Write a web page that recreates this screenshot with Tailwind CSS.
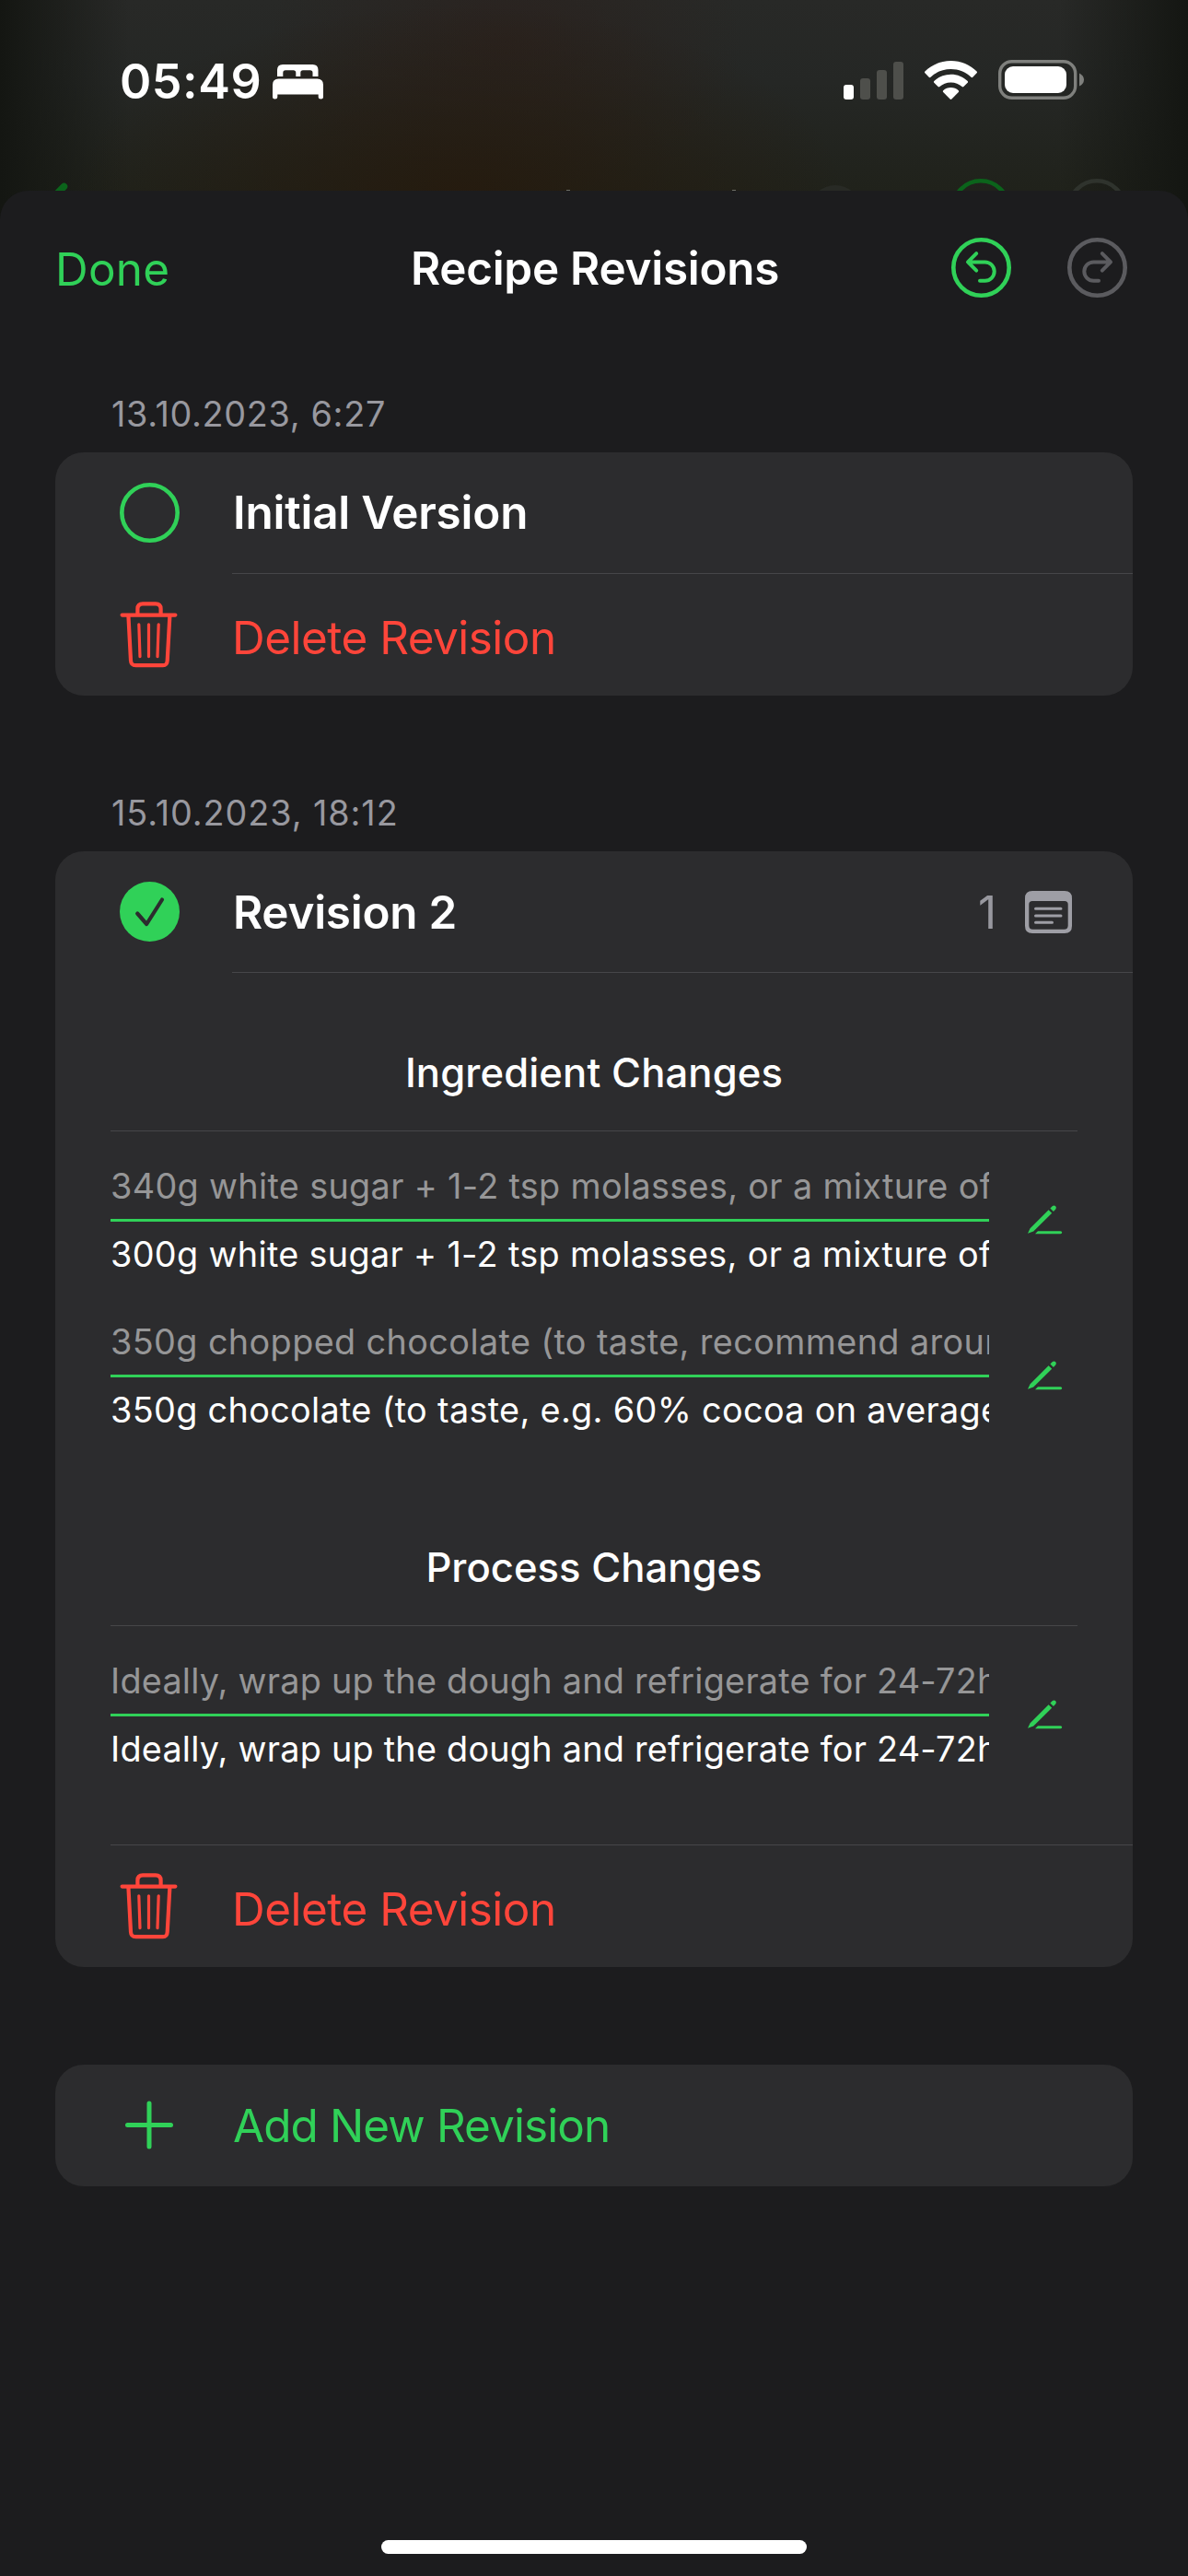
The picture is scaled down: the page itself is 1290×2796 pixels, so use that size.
<!DOCTYPE html>
<html lang="en">
<head>
<meta charset="utf-8">
<title>Recipe Revisions</title>
<script src="https://cdn.jsdelivr.net/npm/@tailwindcss/browser@4"></script>
</head>
<body class="bg-[#151713] font-['Inter',sans-serif] text-white">
<svg class="hidden">
  <symbol id="trash" viewBox="0 0 64 72">
    <g fill="none" stroke="#ff453a" stroke-linecap="round" stroke-linejoin="round">
      <path stroke-width="4.2" d="M2.6 14.6H60.4M19.4 14V8Q19.4 2.4 25 2.4H39Q44.6 2.4 44.6 8V14M9.4 15L12 64Q12.3 69.2 17.4 69.2H47Q51.4 69.2 51.7 64L54.4 15"/>
      <path stroke-width="3.2" d="M20.8 24.8L22 59.6M31.5 24.8V59.6M42.2 24.8L41 59.6"/>
    </g>
  </symbol>
  <symbol id="pencil" viewBox="0 0 38 33">
    <path fill="#30d158" d="M0 31.8L2.6 26.2L22.6 6.2L26.2 9.8L6.2 29.6ZM24.4 4.6L26.9 2.1Q28.6 .8 30.2 2.2Q31.6 3.8 30.3 5.5L27.9 8ZM11 29.2H35.6Q37.2 29.4 37.2 30.7Q37.2 32 35.6 32.2H8Z"/>
  </symbol>
</svg>
<div class="flex h-[2796px] w-[1290px] flex-col overflow-hidden bg-[radial-gradient(ellipse_420px_210px_at_500px_215px,#261a0de0,#261a0d00),radial-gradient(ellipse_260px_170px_at_550px_45px,#2c1e1990,#2c1e1900),linear-gradient(90deg,#141612_0px,#141612b0_40px,#14161200_140px,#14161200_1150px,#141612b0_1250px,#141612_1290px),linear-gradient(180deg,#282927_0px,#252725_90px,#20221b_207px,#15160f_250px)]">

  <!-- status bar -->
  <header class="relative flex h-[207px] shrink-0 items-start justify-between pl-[130px] pr-[113px] pt-[62px]">
    <div class="flex items-center gap-[12px]">
      <span class="pt-px text-[52px] font-semibold leading-[52px] tracking-[0.54px]">05:49</span>
      <svg class="mt-px h-[38px] w-[55px]" viewBox="0 0 55 38" fill="#fff">
        <path d="M5 13V6Q5 0 11 0H43.500Q49.500 0 49.500 6V13H43.500V9Q43.500 6.300 40.800 6.300H33Q30.300 6.300 30.300 9V13H25.300V9Q25.300 6.300 22.600 6.300H14Q11.300 6.300 11.300 9V13Z"/>
        <path d="M0 22Q0 15.500 6.500 15.500H48.500Q55 15.500 55 22V35Q55 37.500 52.500 37.500Q49.700 37.500 49.700 35V32.500H5.300V35Q5.300 37.500 2.500 37.500Q0 37.500 0 35Z"/>
      </svg>
    </div>
    <div class="flex items-center pt-[3px]">
      <svg class="mr-[23px] h-[42px] w-[65px]" viewBox="0 0 65 42">
        <rect x="0" y="26" width="11" height="16" rx="3" fill="#fff"/>
        <g fill="#4e4f4b"><rect x="18" y="19" width="11" height="23" rx="3"/><rect x="36" y="10" width="11" height="32" rx="3"/><rect x="54" y="1" width="11" height="41" rx="3"/></g>
      </svg>
      <svg class="mr-[23px] h-[42px] w-[57px]" viewBox="0 0 57 42" fill="#fff">
        <path d="M28.500 0C39.500 0 49.400 4.300 56.600 11.500Q57.400 12.400 56.600 13.300L52.300 17.700Q51.400 18.600 50.500 17.700C44.700 12.200 37 9.100 28.500 9.100S12.300 12.200 6.500 17.700Q5.600 18.600 4.700 17.700L.4 13.300Q-.4 12.400 .4 11.500C7.600 4.300 17.500 0 28.500 0Z"/>
        <path d="M28.500 14.700C35.600 14.700 42 17.400 46.700 22Q47.500 22.900 46.700 23.800L42.400 28.100Q41.500 28.900 40.600 28.100C37.400 25.200 33.200 23.500 28.500 23.500S19.600 25.200 16.400 28.100Q15.500 28.900 14.600 28.100L10.300 23.800Q9.500 22.900 10.300 22C15 17.400 21.400 14.700 28.500 14.700Z"/>
        <path d="M28.500 29C31.700 29 34.600 30.200 36.800 32.200Q37.600 33.100 36.800 34L29.400 41.500Q28.500 42.300 27.600 41.500L20.200 34Q19.400 33.100 20.200 32.200C22.400 30.200 25.300 29 28.500 29Z"/>
      </svg>
      <svg class="h-[43px] w-[93px]" viewBox="0 0 93 43">
        <rect x="1.700" y="1.700" width="82" height="39.600" rx="13" fill="none" stroke="#7f807d" stroke-width="3.400"/>
        <rect x="7" y="7" width="67" height="29" rx="9" fill="#fff"/>
        <path d="M88 14.500Q93 17 93 21.500T88 28.500Z" fill="#7f807d"/>
      </svg>
    </div>
    <!-- toolbar of the screen underneath the sheet -->
    <svg class="absolute bottom-0 left-0 h-[17px] w-[1290px]" viewBox="0 190 1290 17" fill="none">
      <path d="M50 222L69.500 202.500" stroke="#0b641b" stroke-width="7.500" stroke-linecap="round"/>
      <path d="M615 206.500H619M795 206.500H799" stroke="#6d6d66" stroke-width="1.200"/>
      <circle cx="907" cy="229.500" r="28.500" fill="#282a25"/>
      <circle cx="1065" cy="226.500" r="30.200" stroke="#0b641b" stroke-width="4.600"/>
      <circle cx="1191" cy="226.500" r="30.200" stroke="#2f332d" stroke-width="4.600"/>
    </svg>
  </header>

  <main class="flex grow flex-col rounded-t-[31px] bg-[#1c1c1e]">
    <nav class="grid h-[167px] grid-cols-[1fr_auto_1fr] items-center px-[60px]">
      <button class="mt-[3px] justify-self-start text-[49.4px] leading-[60px] tracking-[0.25px] text-[#30d158]">Done</button>
      <h1 class="pl-[2px] text-[49.4px] font-semibold leading-[60px] tracking-[-0.25px]">Recipe Revisions</h1>
      <div class="flex justify-end gap-[61px] pr-[6px]">
        <svg class="size-[65px]" viewBox="0 0 65 65" fill="none" stroke="#30d158" stroke-linecap="round" stroke-linejoin="round">
          <circle cx="32.500" cy="32.500" r="30.200" stroke-width="4.600"/>
          <path stroke-width="4" d="M27.200 17.200L18 26.400L27.200 35.600M18.500 26.400H36.500A10.200 10.200 0 0 1 36.500 46.800H31"/>
        </svg>
        <svg class="size-[65px]" viewBox="0 0 65 65" fill="none" stroke="#5b5b5f" stroke-linecap="round" stroke-linejoin="round">
          <circle cx="32.500" cy="32.500" r="30.200" stroke-width="4.600"/>
          <path stroke-width="4" d="M37.800 17.200L47 26.400L37.800 35.600M46.500 26.400H28.500A10.200 10.200 0 0 0 28.500 46.800H34"/>
        </svg>
      </div>
    </nav>

    <h2 class="mt-[50px] pl-[121px] text-[37.8px] leading-[50px] tracking-[0.66px] text-[#98989f]">13.10.2023, 6:27</h2>
    <section class="mx-[60px] mt-[17px] flex flex-col rounded-[31px] bg-[#2c2c2e]">
      <div class="flex h-[131px] items-center pl-[70px]">
        <svg class="mr-[58px] size-[65px]" viewBox="0 0 65 65"><circle cx="32.500" cy="32.500" r="30.200" fill="none" stroke="#30d158" stroke-width="4.600"/></svg>
        <h3 class="mb-[2px] text-[49.4px] font-semibold leading-[60px] tracking-[-0.2px]">Initial Version</h3>
      </div>
      <hr class="ml-[192px] border-t border-[#464649]">
      <div class="flex h-[132px] items-center pl-[70px] text-[#ff453a]">
        <svg class="mr-[58px] h-[72px] w-[64px]"><use href="#trash"/></svg>
        <button class="mt-[6px] text-[49.4px] leading-[60px] tracking-[-0.49px]">Delete Revision</button>
      </div>
    </section>

    <h2 class="mt-[102px] pl-[121px] text-[37.8px] leading-[50px] tracking-[0.91px] text-[#98989f]">15.10.2023, 18:12</h2>
    <section class="mx-[60px] mt-[17px] flex flex-col rounded-[31px] bg-[#2c2c2e]">
      <div class="flex h-[131px] items-center pl-[70px] pr-[66px]">
        <svg class="mr-[58px] size-[65px]" viewBox="0 0 65 65"><circle cx="32.500" cy="32.500" r="32.500" fill="#30d158"/><path d="M19.200 34.500L29.200 46L46 19.500" fill="none" stroke="#2c2c2e" stroke-width="4.200" stroke-linecap="round" stroke-linejoin="round"/></svg>
        <h3 class="grow text-[49.4px] font-semibold leading-[60px] tracking-[-0.24px]">Revision 2</h3>
        <span class="mr-[31px] text-[49.4px] leading-[60px] text-[#98989f]">1</span>
        <svg class="h-[46px] w-[51px]" viewBox="0 0 51 46">
          <path fill="#9e9ea5" fill-rule="evenodd" d="M8 0H43Q51 0 51 8V38Q51 46 43 46H8Q0 46 0 38V8Q0 0 8 0ZM8 11Q4.300 11 4.300 14.700V37.500Q4.300 41.700 8.500 41.700H42.500Q46.700 41.700 46.700 37.500V14.700Q46.700 11 43 11Z"/>
          <path d="M11.500 19.300H39M11.500 26.900H39M11.500 34.200H29.500" stroke="#9e9ea5" stroke-width="3" stroke-linecap="round"/>
        </svg>
      </div>
      <hr class="ml-[192px] border-t border-[#464649]">

      <div class="flex flex-col px-[60px] pb-[69px] pt-[44px]">
        <h4 class="flex h-[128px] items-center justify-center border-b border-[#464649] pt-[2px] text-[43.6px] font-medium tracking-[0.11px]">Ingredient Changes</h4>
        <div class="mt-[23px] flex flex-col gap-[24px]">
          <div class="flex items-center">
            <div class="w-[954px] overflow-hidden whitespace-nowrap text-[37.8px] tracking-[0.33px]">
              <p class="h-[72px] leading-[72px] text-[#969697]">340g white sugar + 1-2 tsp molasses, or a mixture of</p>
              <hr class="border-t-[3px] border-[#30d158]">
              <p class="h-[70px] leading-[70px]">300g white sugar + 1-2 tsp molasses, or a mixture of</p>
            </div>
            <svg class="ml-[42px] h-[33px] w-[38px]"><use href="#pencil"/></svg>
          </div>
          <div class="flex items-center">
            <div class="w-[954px] overflow-hidden whitespace-nowrap text-[37.8px]">
              <p class="h-[72px] leading-[72px] tracking-[0.38px] text-[#969697]">350g chopped chocolate (to taste, recommend around</p>
              <hr class="border-t-[3px] border-[#30d158]">
              <p class="h-[70px] leading-[70px] tracking-[0.32px]">350g chocolate (to taste, e.g. 60% cocoa on average</p>
            </div>
            <svg class="ml-[42px] h-[33px] w-[38px]"><use href="#pencil"/></svg>
          </div>
        </div>

        <h4 class="mt-[72px] flex h-[128px] items-center justify-center border-b border-[#464649] pt-[2px] text-[43.6px] font-medium tracking-[0.02px]">Process Changes</h4>
        <div class="mt-[23px] flex items-center">
          <div class="w-[954px] overflow-hidden whitespace-nowrap text-[37.8px] tracking-[0.23px]">
            <p class="h-[72px] leading-[72px] text-[#969697]">Ideally, wrap up the dough and refrigerate for 24-72h</p>
            <hr class="border-t-[3px] border-[#30d158]">
            <p class="h-[70px] leading-[70px]">Ideally, wrap up the dough and refrigerate for 24-72h</p>
          </div>
          <svg class="ml-[42px] h-[33px] w-[38px]"><use href="#pencil"/></svg>
        </div>
      </div>

      <hr class="ml-[60px] border-t border-[#464649]">
      <div class="flex h-[132px] items-center pl-[70px] text-[#ff453a]">
        <svg class="mr-[58px] h-[72px] w-[64px]"><use href="#trash"/></svg>
        <button class="mt-[6px] text-[49.4px] leading-[60px] tracking-[-0.49px]">Delete Revision</button>
      </div>
    </section>

    <section class="mx-[60px] mt-[106px] flex h-[132px] items-center rounded-[31px] bg-[#2c2c2e] pl-[70px]">
      <svg class="mb-[2px] mr-[57px] size-[65px]" viewBox="0 0 65 65"><path d="M32 9V56M8.500 32.500H55.500" stroke="#30d158" stroke-width="5" stroke-linecap="round"/></svg>
      <button class="pl-px text-[49.4px] leading-[60px] tracking-[-0.87px] text-[#30d158]">Add New Revision</button>
    </section>

    <div class="mx-auto mb-[24px] mt-auto h-[15px] w-[462px] rounded-full bg-white"></div>
  </main>
</div>
</body>
</html>
